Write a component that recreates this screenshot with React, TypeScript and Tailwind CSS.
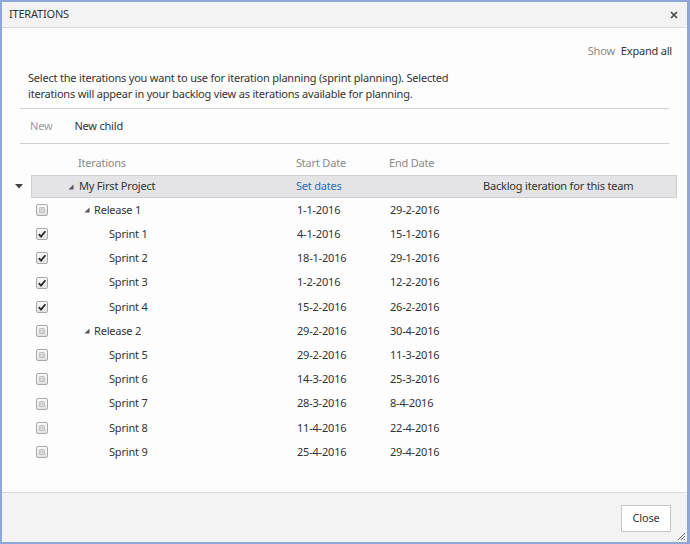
import React from "react";

type Row = { name: string; level: 1 | 2; start: string; end: string; checked: boolean };

const rows: Row[] = [
  { name: "Release 1", level: 1, start: "1-1-2016", end: "29-2-2016", checked: false },
  { name: "Sprint 1", level: 2, start: "4-1-2016", end: "15-1-2016", checked: true },
  { name: "Sprint 2", level: 2, start: "18-1-2016", end: "29-1-2016", checked: true },
  { name: "Sprint 3", level: 2, start: "1-2-2016", end: "12-2-2016", checked: true },
  { name: "Sprint 4", level: 2, start: "15-2-2016", end: "26-2-2016", checked: true },
  { name: "Release 2", level: 1, start: "29-2-2016", end: "30-4-2016", checked: false },
  { name: "Sprint 5", level: 2, start: "29-2-2016", end: "11-3-2016", checked: false },
  { name: "Sprint 6", level: 2, start: "14-3-2016", end: "25-3-2016", checked: false },
  { name: "Sprint 7", level: 2, start: "28-3-2016", end: "8-4-2016", checked: false },
  { name: "Sprint 8", level: 2, start: "11-4-2016", end: "22-4-2016", checked: false },
  { name: "Sprint 9", level: 2, start: "25-4-2016", end: "29-4-2016", checked: false },
];

function Tri() {
  return (
    <svg width="6" height="6" viewBox="0 0 6 6" className="shrink-0">
      <polygon points="5.5,0.5 5.5,5.5 0.5,5.5" fill="#555" />
    </svg>
  );
}

function Check({ checked }: { checked: boolean }) {
  return (
    <div className="w-[12px] h-[12px] rounded-[2px] border border-[#a9a9a9] bg-gradient-to-b from-[#fafafa] to-[#e2e2e2] flex items-center justify-center">
      {checked ? (
        <svg width="10" height="10" viewBox="0 0 10 10">
          <path d="M1.8 5.2 L4 7.6 L8.4 2.2" stroke="#2b2b2b" strokeWidth="1.8" fill="none" />
        </svg>
      ) : (
        <div className="w-[6px] h-[6px] rounded-[1px] bg-[#d6d6d6] border border-[#c4c4c4]" />
      )}
    </div>
  );
}

export default function App() {
  return (
    <div
      className="w-[690px] h-[544px] border-l-2 border-t-2 border-r-[3px] border-b-[2px] border-[#8ca7d8] bg-[#fdfdfd] flex flex-col text-[#333] text-[11px] tracking-[-0.2px]"
      style={{ fontFamily: "'Noto Sans', 'Open Sans', sans-serif" }}
    >
      {/* Title bar */}
      <div className="h-[26px] shrink-0 bg-[#f3f3f3] border-b border-[#dadada] flex items-center justify-between pl-[7px] pr-[9px]">
        <span className="text-[#333]">ITERATIONS</span>
        <svg width="8" height="8" viewBox="0 0 8 8">
          <path d="M1 1 L7 7 M7 1 L1 7" stroke="#444" strokeWidth="1.6" />
        </svg>
      </div>

      {/* Body */}
      <div className="flex-1 flex flex-col">
        <div className="flex justify-end pr-[15px] pt-[15px] h-[40px]">
          <span className="text-[#8a8a8a] mr-[6px]">Show</span>
          <span className="text-[#333]">Expand all</span>
        </div>
        <div className="px-[18px]">
          <p className="pl-[8px] leading-[16px] text-[#333] pt-[2px] pb-[6px] border-b border-[#cfcfcf]">
            Select the iterations you want to use for iteration planning (sprint planning). Selected
            <br />
            iterations will appear in your backlog view as iterations available for planning.
          </p>
          <div className="h-[35px] flex items-center border-b border-[#cfcfcf]">
            <span className="text-[#9a9a9a] ml-[10px]">New</span>
            <span className="text-[#333] ml-[22px]">New child</span>
          </div>
        </div>

        {/* Header */}
        <div className="flex items-center h-[31px] pt-[7px] text-[#8a8a8a]">
          <div className="w-[29px]" />
          <div className="w-[37px]" />
          <div className="w-[228px] pl-[10px]">Iterations</div>
          <div className="w-[93px]">Start Date</div>
          <div>End Date</div>
        </div>

        {/* Root row */}
        <div className="flex items-center h-[23px] mr-[10px]">
          <div className="w-[29px] flex justify-end pr-[8px]">
            <svg width="8" height="5" viewBox="0 0 8 5">
              <polygon points="0,0 8,0 4,4.5" fill="#444" />
            </svg>
          </div>
          <div className="flex-1 h-full flex items-center bg-[#e4e4e6] border border-[#cdcdd2]">
            <div className="w-[36px]" />
            <div className="w-[228px] flex items-center">
              <Tri />
              <span className="ml-[5px]">My First Project</span>
            </div>
            <div className="w-[93px] text-[#2a6fb8]">Set dates</div>
            <div className="w-[94px]" />
            <div>Backlog iteration for this team</div>
          </div>
        </div>

        {rows.map((r) => (
          <div key={r.name} className="flex items-center h-[24.2px]">
            <div className="w-[29px]" />
            <div className="w-[37px] flex pl-[5px]">
              <Check checked={r.checked} />
            </div>
            <div className={`w-[228px] flex items-center ${r.level === 1 ? "pl-[16px]" : "pl-[41px]"}`}>
              {r.level === 1 && <Tri />}
              <span className={r.level === 1 ? "ml-[4px]" : ""}>{r.name}</span>
            </div>
            <div className="w-[93px] pl-[1px]">{r.start}</div>
            <div className="w-[94px] pl-[1px]">{r.end}</div>
          </div>
        ))}
      </div>

      {/* Footer */}
      <div className="h-[50px] shrink-0 bg-[#f3f3f3] border-t border-[#dadada] flex items-center justify-end pr-[16px] relative">
        <button className="w-[50px] h-[27px] bg-white border border-[#c8c8c8] text-[#333] mt-[1px]">Close</button>
        <svg width="10" height="10" viewBox="0 0 10 10" className="absolute right-[1px] bottom-[1px]">
          <path d="M9 2 L2 9 M9 5 L5 9 M9 8 L8 9" stroke="#666" strokeWidth="1" />
        </svg>
      </div>
    </div>
  );
}
